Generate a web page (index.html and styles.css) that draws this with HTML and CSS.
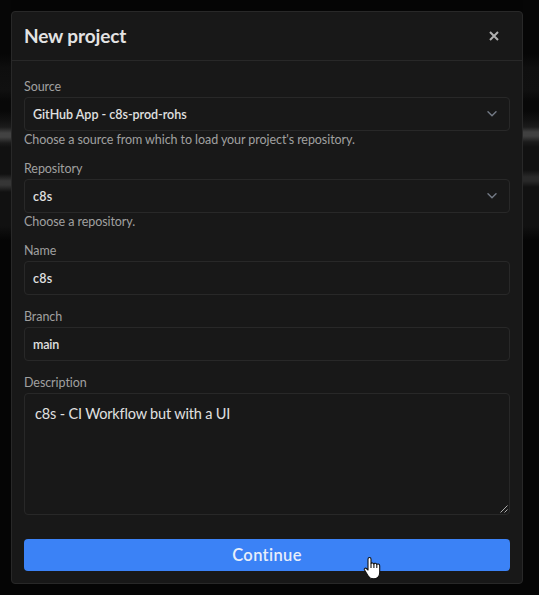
FILE: index.html
```
<!DOCTYPE html>
<html lang="en">
<head>
<meta charset="utf-8">
<title>New project</title>
<link rel="stylesheet" href="styles.css">
</head>
<body>
<main class="dialog">
  <header class="dialog-header">
    <h1 class="title">New project</h1>
    <button class="close" aria-label="Close"><svg width="10" height="10" viewBox="0 0 10 10"><path d="M1 1 9 9M9 1 1 9"/></svg></button>
  </header>
  <form class="form">
    <div class="field">
      <label class="label">Source</label>
      <div class="control"><span class="value">GitHub App - c8s-prod-rohs</span><svg class="chevron" width="10" height="6" viewBox="0 0 10 6"><path d="M1 .8 5 4.8 9 .8"/></svg></div>
      <p class="help">Choose a source from which to load your project's repository.</p>
    </div>
    <div class="field">
      <label class="label">Repository</label>
      <div class="control"><span class="value short">c8s</span><svg class="chevron" width="10" height="6" viewBox="0 0 10 6"><path d="M1 .8 5 4.8 9 .8"/></svg></div>
      <p class="help">Choose a repository.</p>
    </div>
    <div class="field">
      <label class="label">Name</label>
      <div class="control"><span class="value short">c8s</span></div>
    </div>
    <div class="field">
      <label class="label">Branch</label>
      <div class="control"><span class="value branch">main</span></div>
    </div>
    <div class="field">
      <label class="label">Description</label>
      <div class="control area"><span class="area-text">c8s - CI Workflow but with a UI</span><svg class="grip" width="8" height="8" viewBox="0 0 8 8"><path d="M.5 7.5 7.5 .5M4.5 7.5 7.5 4.5"/></svg></div>
    </div>
    <button class="submit" type="button">Continue</button>
  </form>
</main>
<svg class="cursor" width="18" height="24" viewBox="0 0 18 24"><path d="M6.5 1.5C5.4 1.5 5 2.3 5 3.2V14L3.4 12.5C2.2 11.5.8 12.6 1.4 13.8L5.2 20C6.4 22 7.8 22.8 10.4 22.8C14.6 22.8 16.7 20.5 16.7 16.5V9.7C16.7 7.8 14.3 7.6 13.8 8.6C13.5 7 11.2 6.8 10.8 8C10.3 6.6 8.4 6.7 8 7.5V3.2C8 2.3 7.6 1.5 6.5 1.5Z"/><path d="M8 7.5V12M10.9 8V12M13.8 8.6V12"/></svg>
</body>
</html>
```
FILE: styles.css
```
* { box-sizing: border-box; }
body {
  margin: 0;
  padding: 11px;
  height: 595px;
  overflow: hidden;
  font-family: Lato, "Liberation Sans", sans-serif;
  font-variant-ligatures: none;
  background-color: #050505;
  background-image:
    linear-gradient(#060606 0, #060606 54px, #0f0f0f 68px, #101010 90px, #080808 101px, #080808 111px, #121212 121px, #1b1b1b 127px, #404040 132px, #404040 136px, #1b1b1b 142px, #111 147px, #111 170px, #292929 177px, #292929 181px, #111 187px, #111 226px, #050505 240px, #050505),
    linear-gradient(#060606 0, #060606 54px, #0e0e0e 68px, #101010 90px, #080808 101px, #080808 111px, #121212 121px, #1b1b1b 127px, #424242 133px, #424242 137px, #1b1b1b 143px, #111 147px, #111 174px, #363636 181px, #363636 185px, #111 192px, #111 226px, #050505 240px, #050505);
  background-size: 16px 595px, 11px 595px;
  background-position: right top, left top;
  background-repeat: no-repeat;
}
h1, p, button { margin: 0; font: inherit; }
.dialog {
  width: 512px;
  height: 573px;
  background: #181818;
  border: 1px solid #282828;
  border-radius: 4px;
}
.dialog-header {
  height: 49px;
  padding: 0 12px;
  display: flex;
  align-items: center;
  justify-content: space-between;
  border-bottom: 1px solid #282828;
}
.title { font-size: 19px; font-weight: 700; line-height: 24px; letter-spacing: -.13px; color: #e3e3e3; }
.close { width: 32px; height: 32px; padding: 0; border: 0; background: none; display: grid; place-items: center; }
.close path { fill: none; stroke: #b0b0b0; stroke-width: 2; }
.form { padding: 18px 12px 12px; }
.field { margin-bottom: 14px; }
.label, .help { display: block; font-size: 12.5px; line-height: 16px; letter-spacing: -.07px; color: #a0a0a0; white-space: nowrap; }
.label { height: 18px; }
.help { height: 16px; line-height: 18px; }
.control {
  height: 34px;
  padding: 0 12px 0 8px;
  display: flex;
  align-items: center;
  justify-content: space-between;
  border: 1px solid #282828;
  border-radius: 4px;
}
.value { padding-top: 1px; font-size: 12.5px; font-weight: 600; line-height: 17px; letter-spacing: -.02px; color: #e0e0e0; }
.short { letter-spacing: .25px; }
.branch { letter-spacing: -.2px; }
.chevron path { fill: none; stroke: #747b87; stroke-width: 1.4; stroke-linecap: round; stroke-linejoin: round; }
.area { height: 122px; padding: 10px; align-items: flex-start; }
.area-text { font-size: 14.5px; line-height: 20px; letter-spacing: -.17px; color: #e0e0e0; }
.grip { align-self: flex-end; margin: 0 -9px -9px 0; }
.grip path { fill: none; stroke: #aaa; stroke-width: 1; }
.submit {
  display: block;
  width: 100%;
  height: 32px;
  margin-top: 24px;
  padding: 0;
  border: 0;
  border-radius: 4px;
  background: #3b82f6;
  color: #e8eefa;
  font-size: 16.5px;
  font-weight: 600;
  line-height: 32px;
  letter-spacing: .35px;
}
.cursor { position: absolute; left: 363px; top: 556px; }
.cursor path { fill: #fff; stroke: #111; stroke-width: 1.1; stroke-linejoin: round; }
```
